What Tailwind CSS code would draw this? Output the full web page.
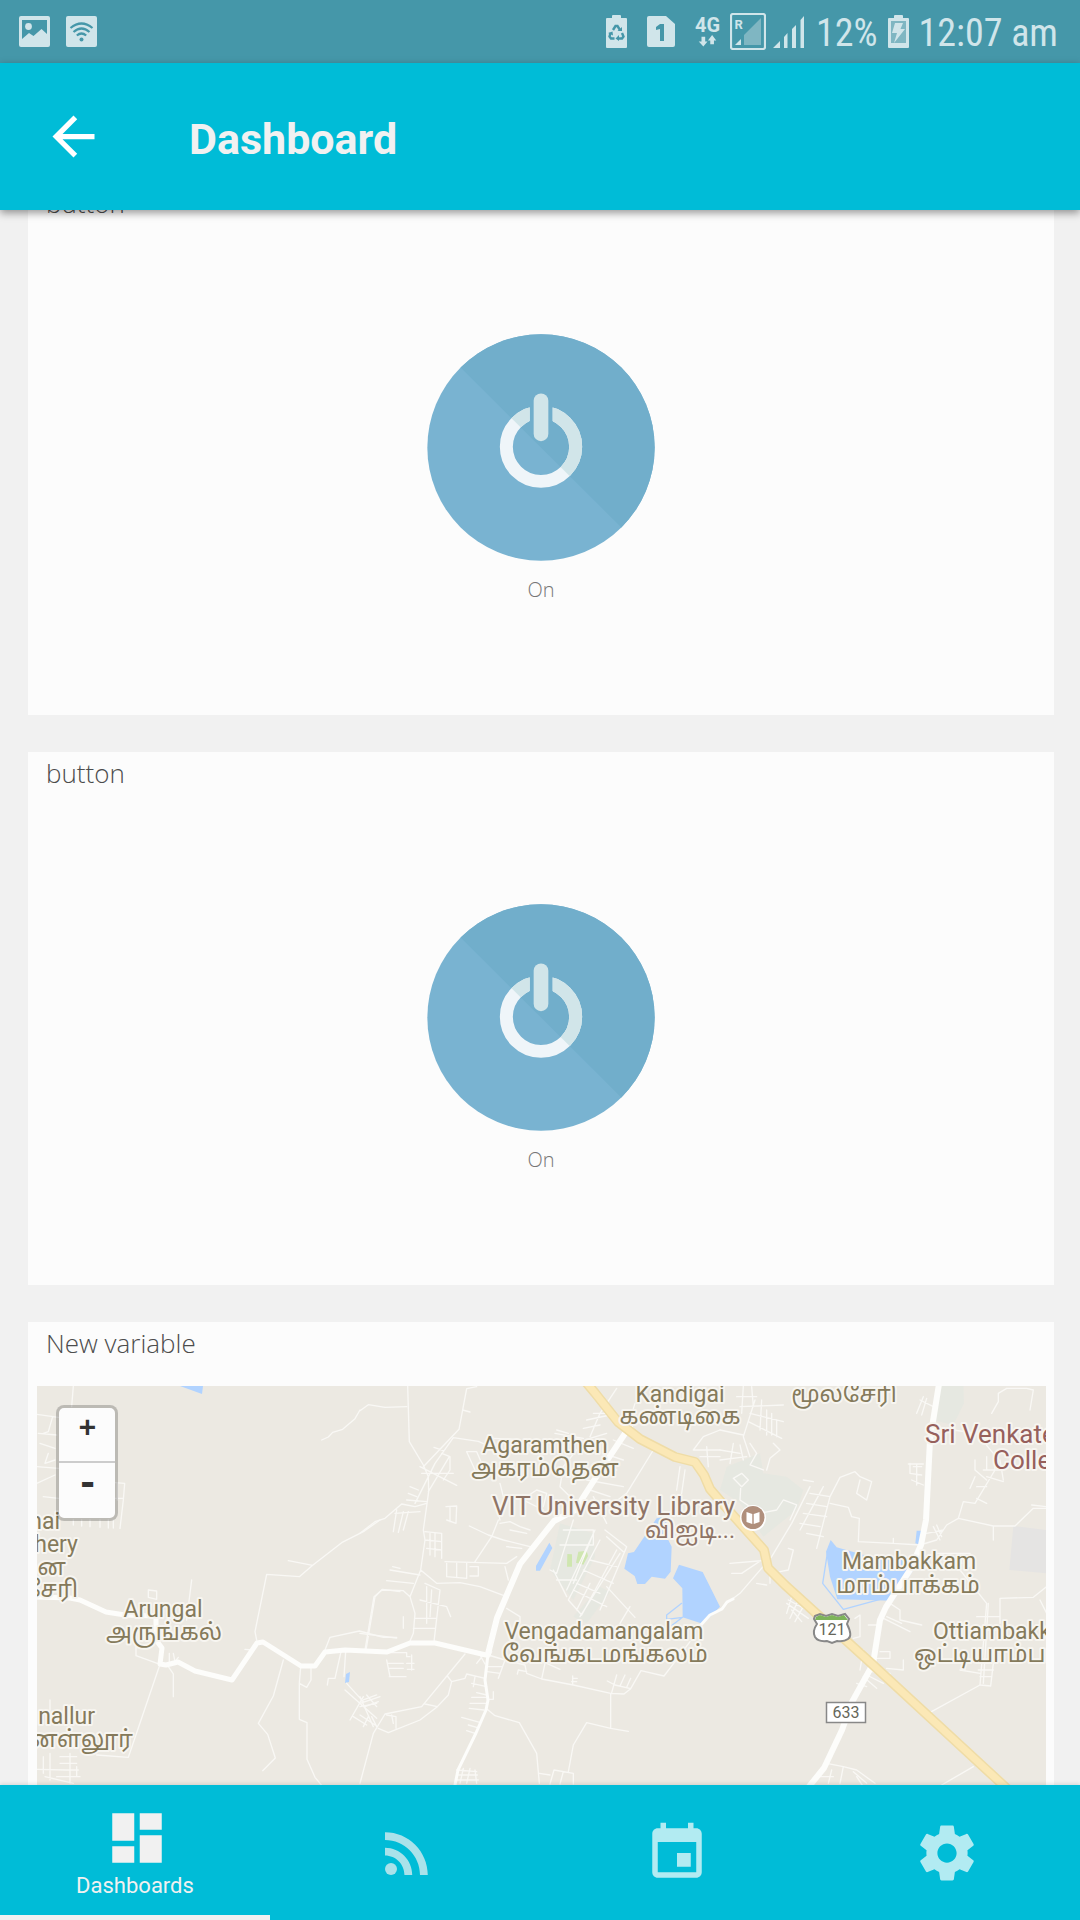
<!DOCTYPE html>
<html lang="en">
<head>
<meta charset="utf-8">
<meta name="viewport" content="width=device-width, initial-scale=1">
<title>Dashboard</title>
<script src="https://cdn.jsdelivr.net/npm/@tailwindcss/browser@4"></script>
</head>
<body class="flex h-screen flex-col overflow-hidden bg-[#f1f1f1] font-['Roboto',sans-serif]">

<!-- Status bar -->
<div class="flex h-[63px] shrink-0 items-center justify-between bg-[#4597a9] pr-[22px] pl-[19px] text-[#d0e5ea]">
  <div class="flex items-center gap-4">
    <svg class="h-[31px] w-[31px]" viewBox="0 0 31 31" fill="currentColor" aria-hidden="true"><path fill-rule="evenodd" d="M2 0H29Q31 0 31 2V29Q31 31 29 31H2Q0 31 0 29V2Q0 0 2 0ZM3 4V23L10 17L14.500 20L22.500 13L28 18V4Z"/><circle cx="9.500" cy="10.500" r="3.400"/></svg>
    <svg class="h-[31px] w-[31px]" viewBox="0 0 31 31" aria-hidden="true"><rect width="31" height="31" rx="2" fill="currentColor"/><g fill="none" stroke="#4597a9" stroke-width="2.200"><path d="M4.500 12Q15.500 3 26.500 12"/><path d="M7.500 16Q15.500 9 23.500 16"/><path d="M10.800 19.500Q15.500 15.500 20.200 19.500"/></g><circle cx="15.500" cy="23.500" r="2" fill="#4597a9"/></svg>
  </div>
  <div class="flex items-center">
    <svg class="h-[33px] w-[21px]" viewBox="0 0 21 33" aria-hidden="true"><path fill="currentColor" d="M6 1Q6 0 7 0H14Q15 0 15 1V3H20Q21 3 21 4V32Q21 33 20 33H1Q0 33 0 32V4Q0 3 1 3H6Z"/><g fill="none" stroke="#4597a9" stroke-width="2.400"><path d="M7 15L9.500 11H11.500L14 15M4.500 18L3.500 21.500L5 23.500H8.500M12.500 23.500H16L17.500 21.500L16 18"/></g><path fill="#4597a9" d="M11.500 16H16V12ZM2 18L6.500 16.500L7 20.500ZM13 20V26L9.500 23.500Z"/></svg>
    <svg class="ml-5 h-[31px] w-[28px]" viewBox="0 0 28 31" aria-hidden="true"><path fill="currentColor" d="M2 0H19L28 8V29Q28 31 26 31H2Q0 31 0 29V2Q0 0 2 0Z"/><path fill="#4597a9" d="M13 8H17V25H13V13L9 14V11Z"/></svg>
    <div class="ml-5 flex w-[25px] flex-col items-center">
      <span class="text-[20px] leading-[19px] font-bold">4G</span>
      <svg class="h-[12px] w-[19px]" viewBox="0 0 19 13" fill="currentColor" aria-hidden="true"><path d="M3 2H7V7H9.500L5 12.500L0 7H3ZM12.500 10V6H10L14.500 0L19 6H16.500V10Z"/></svg>
    </div>
    <svg class="ml-2.5 h-[37px] w-[36px]" viewBox="0 0 36 37" aria-hidden="true"><rect x="1" y="1" width="34" height="35" rx="2" fill="none" stroke="currentColor" stroke-width="2.200"/><path fill="#7fb6c2" d="M31 5V32H14V22Z"/><path fill="currentColor" d="M11 26V32H5Z"/><text x="4.500" y="16" font-size="13" font-weight="700" fill="currentColor">R</text></svg>
    <svg class="ml-[7px] h-[32px] w-[31px]" viewBox="0 0 31 32" fill="currentColor" aria-hidden="true"><path d="M0 32L7 25V32ZM11 21L14.500 17V32H11ZM19 13L23 9V32H19ZM27.500 4L31 0V32H27.500Z"/></svg>
    <span class="ml-3 pt-1 font-['Roboto_Condensed','Liberation_Sans_Narrow','Roboto',sans-serif] text-[38px] leading-[59px]">12%</span>
    <svg class="ml-2.5 h-[33px] w-[21px]" viewBox="0 0 21 33" aria-hidden="true"><path fill="currentColor" d="M6 1Q6 0 7 0H14Q15 0 15 1V3H20Q21 3 21 4V32Q21 33 20 33H1Q0 33 0 32V4Q0 3 1 3H6Z"/><path fill="#7fb6c2" d="M3 6H18V28H3Z"/><path fill="currentColor" d="M7 8H15L12.500 14H17L6 28L9 18H4Z"/></svg>
    <span class="ml-2.5 pt-1 font-['Roboto_Condensed','Liberation_Sans_Narrow','Roboto',sans-serif] text-[38px] leading-[59px]">12:07 am</span>
  </div>
</div>

<!-- Toolbar -->
<header class="relative z-10 flex h-[147px] shrink-0 items-center bg-[#00bcd7] shadow-[0_3px_8px_rgba(0,0,0,0.4)]">
  <button type="button" aria-label="Back" class="ml-[42px] text-white">
    <svg class="h-[63px] w-[63px]" viewBox="0 0 24 24" fill="currentColor"><path d="M20 11H7.830l5.590-5.590L12 4l-8 8 8 8 1.410-1.410L7.830 13H20v-2z"/></svg>
  </button>
  <h1 class="ml-[84px] pt-1 text-[43px] leading-[52px] font-bold text-[#f1f1f1]">Dashboard</h1>
</header>

<main class="min-h-0 flex-1 overflow-hidden">
  <div class="-mt-7 flex flex-col gap-[37px] pr-[26px] pl-7">

    <section class="flex h-[533px] flex-col bg-[#fcfcfc]">
      <h2 class="px-[18px] pt-[3px] font-['Open_Sans',sans-serif] text-[26px] leading-9 font-light text-[#4c4c4c]">button</h2>
      <div class="flex flex-1 flex-col items-center justify-center gap-4">
        <button type="button" aria-label="Toggle first button" class="rounded-full">
          <svg class="h-[227px] w-[228px]" viewBox="0 0 684 684" preserveAspectRatio="none">
            <defs>
              <clipPath id="disc"><circle cx="342" cy="342" r="341"/></clipPath>
              <clipPath id="ring"><path d="M0 0H308V342H377V0H684V684H0Z"/></clipPath>
              <clipPath id="upper"><path d="M0 0H684V684Z"/></clipPath>
            </defs>
            <g id="power">
              <g clip-path="url(#disc)"><path fill="#79b3d1" d="M0 0H684V684H0Z"/><path fill="#71aecb" d="M0 0H684V684Z"/></g>
              <g clip-path="url(#ring)" fill="none" stroke-width="39"><circle cx="342" cy="340" r="104" stroke="#eff5f9"/><circle cx="342" cy="340" r="104" stroke="#d1e5e9" clip-path="url(#upper)"/></g>
              <rect x="320" y="179" width="44" height="144" rx="22" fill="#d1e5e9"/>
            </g>
          </svg>
        </button>
        <p class="font-['Open_Sans',sans-serif] text-[20px] leading-[26px] font-light text-[#777]">On</p>
      </div>
    </section>

    <section class="flex h-[533px] flex-col bg-[#fcfcfc]">
      <h2 class="px-[18px] pt-[3px] font-['Open_Sans',sans-serif] text-[26px] leading-9 font-light text-[#4c4c4c]">button</h2>
      <div class="flex flex-1 flex-col items-center justify-center gap-4">
        <button type="button" aria-label="Toggle second button" class="rounded-full">
          <svg class="h-[227px] w-[228px]" viewBox="0 0 684 684" preserveAspectRatio="none"><use href="#power"/></svg>
        </button>
        <p class="font-['Open_Sans',sans-serif] text-[20px] leading-[26px] font-light text-[#777]">On</p>
      </div>
    </section>

    <section class="bg-[#fcfcfc]">
      <h2 class="px-[18px] pt-[3px] font-['Open_Sans',sans-serif] text-[26px] leading-9 font-light text-[#4c4c4c]">New variable</h2>
      <div class="relative mt-[25px] mr-2 ml-[9px] h-[480px] overflow-hidden bg-[#ece9e2]">
        <svg class="h-full w-full" viewBox="37 1386 1009 480" preserveAspectRatio="xMidYMin slice" role="img" aria-label="Map around Mambakkam">
          <g stroke-linejoin="round" stroke-linecap="round">
            <!-- Campus grounds and water -->
            <g transform="translate(360 1370) scale(.33333)">
              <path fill="#e6e8e1" d="M600 460L700 490L705 560L640 690L570 600ZM720 650L750 665L680 760L640 740Z"/>
              <path fill="#b1d3ff" d="M568 518L577 534L540 602H528V588ZM890 445L918 440L920 500L935 530L932 605L915 626L875 620L855 642H832L824 618L793 596L804 550L822 546ZM957 584L1028 606L1080 710L1030 762L968 742L967 655L939 625Z"/>
              <path fill="none" stroke="#b1d3ff" stroke-width="4" d="M965 700L920 735V748L968 742L930 770"/>
              <path fill="#cfe6b0" d="M622 552L636 553V590H621ZM655 545L680 542L684 558L670 584L648 578Z"/>
            </g>
            <g transform="translate(720 1370) scale(.33333)">
              <path fill="#e6e8e1" d="M20 290L120 250L130 310L200 320L250 360L230 420L130 500L60 400L0 360ZM655 48H730L732 100L700 165L640 150Z"/>
              <path fill="#e5e4e3" d="M880 468L980 480V610L868 600Z"/>
              <path fill="#b1d3ff" d="M332 510L350 532L450 560L600 570L520 692L352 688L330 620L318 545ZM590 482H615L600 524L586 520Z"/>
              <path fill="none" stroke="#b1d3ff" stroke-width="4" d="M322 550L308 640L370 718L480 688"/>
            </g>
            <path fill="#b1d3ff" d="M180 1386H203L202 1394Z"/>
            <path fill="#b1d3ff" d="M346 1674L350 1672L349 1682L345 1683Z"/>

            <!-- Minor streets -->
            <g fill="none" stroke="#f9f8f5" stroke-width="4">
              <g transform="translate(0 1300) scale(.33333)">
                <path d="M220 258L215 320M110 343L175 352M115 400L170 405M120 430L165 445M110 500L175 505M110 550L165 525M130 590L175 595M145 460L135 490L165 480M345 548L374 550L370 600L360 685M345 595H370M352 550V600M220 660V675M245 660V678M270 660V680M300 660V682M325 660V684M340 660V684M965 420L985 411L998 397L1028 388L1065 356L1080 330M158 350L145 395L130 400"/>
              </g>
              <g transform="translate(0 1520) scale(.33333)">
                <path d="M865 122L938 136M1140 0L1090 35L1025 68L938 136L898 170L800 163L765 335L770 360M445 210L470 213V238L445 232ZM575 180L560 300M408 380V407L480 433L385 712L290 705M508 400V430M520 400L525 425M535 412L520 430M505 440L520 462V530M735 388L755 390M850 420L820 528L775 610L803 643L826 714L788 752M902 440L898 490L920 502L933 480V445M898 490L898 598L921 608V718L945 772L965 796M975 390L990 352L1078 333L1150 352L1190 352M1095 390L1122 230L1148 208L1200 215M1023 395L1005 475H985L982 495M1037 395L1032 470M1040 490L1090 545M1035 510L1130 595M1090 530L1050 600M1100 525L1130 560M1080 560L1130 550M1060 590L1100 615M1115 590L1130 620M1178 140L1200 145M110 748L200 750M130 710V760M150 700V780M210 700V790M180 710H230M180 730H230M180 750H235M170 770H240M135 770L220 790M230 740V770M150 540V570M120 570L150 580"/>
              </g>
              <g transform="translate(360 1370) scale(.33333)">
                <path d="M143 48L148 215L190 285L205 320L206 365L190 480L195 510L182 600L150 680L165 730L160 790L145 825M0 122L25 104L75 112L140 110M350 50L320 56L297 178L190 290M308 120L330 126M280 203L355 214L380 225L400 205L470 208M280 203L225 280L165 400M222 232L250 242M268 260L205 365M245 250L270 260V300L250 330M180 290L290 346M185 310L280 310M0 490L45 455L75 445L125 402L165 410L200 400M150 350L175 360M145 370L170 380M140 390L200 395M110 420L100 485M130 425L115 487M105 430L180 425M145 425L130 480M258 410L290 408L288 460L260 450M270 410V455M195 485L245 490V565M210 490V555M225 490V560M195 510L245 515M200 535L245 540M328 468L385 495L430 510L510 530M415 450L395 500L345 575M410 400L420 450M182 600L230 640L300 638L360 650L440 680M90 600L180 615M80 632L160 640M255 575L360 578L440 580L470 560M260 580V620L320 625V580M290 580V620M330 590H355V618H330M420 460L450 455L480 470L510 480M450 480L500 490M440 530L485 535M435 590L445 630M0 790L110 804M18 840L45 680L65 660L130 662L150 680M195 640L240 660L222 815M180 690L260 710L272 740M200 650V760M215 660L210 740M165 745H230M160 775H225M130 740V775M420 340L430 380L480 385L550 420M320 245L345 300M320 245H350L365 280M585 190L640 200L670 205M590 180L625 190M770 55L720 130L690 200M680 150L750 135M670 175L720 165M700 130L750 130M690 205L740 190M650 240L610 290L600 350L650 400M825 100L800 180M880 240L800 370L760 400M700 280L770 300M680 330L790 350M690 360L750 380M730 250L790 270M760 210L820 235M500 380L530 360L560 370L550 410M700 380L740 460M640 450L590 610L570 600M610 480H700M600 525H700V480M590 630H650M580 600L620 680M700 490L640 640M735 480L800 530L720 720M720 510L625 690L665 735L770 540M640 660L740 710M650 640L720 670M670 600L760 640M690 570L770 590M740 500L790 545M650 720L690 640M705 480L620 660M660 740L780 550M740 650L825 742M780 760L810 710M1080 180L1030 200L1000 240M950 360L960 290M975 300L965 370M1000 240H1080M1020 260H1080M1040 230L1045 290"/>
              </g>
              <g transform="translate(360 1600) scale(.33333)">
                <path d="M0 550L40 400L75 342L185 320L315 162M55 385L85 398L180 360L232 320L265 285L275 245L262 228M195 312L232 320M275 245L315 235L320 222L375 235M80 345L108 350V385M95 345L100 370M0 290L40 380M0 310L60 290M10 300L50 285M15 320L55 305M0 345L45 375M25 350L10 380M140 158H80M140 158V170H150M155 165V210M140 190H162M142 208H162M80 180L90 230M85 190H130M85 205H130M88 230H138M370 165L350 190M360 165L375 192M395 155L385 175M385 165L435 180L415 235M385 200H425M382 215L420 220M345 230L340 260M335 250L380 260M350 278L380 285M335 292H378M330 310H378M328 325L372 330M400 275V298H382M305 352L362 368M325 375L350 382M320 392L345 400M378 325L405 347L478 368L530 460L538 550M538 520L570 525M570 552L582 510L640 520V552M610 515L600 552M625 515L640 435L680 368L752 385L805 394M752 280V385M435 180L495 195L500 220L545 237L640 255L752 280L792 282L812 266L843 212L912 228L945 185L990 125M472 222L475 210L500 215M555 190L545 237M560 190L600 208M638 228V252M638 235H652M635 245H650M770 225L755 278M795 225L780 258M742 243L765 255L812 266M812 235L800 262M440 25L480 50V65M290 510L350 515M295 525H352M290 540H355M310 505L300 550M330 505L320 550M345 510L350 550"/>
              </g>
              <g transform="translate(720 1370) scale(.33333)">
                <path d="M70 48L65 130M95 50L100 110M50 80H110M60 110L190 105M90 130L190 155M85 155L185 205M105 90L70 200L90 260M125 90L120 180M140 120V195M155 130V195M170 150V200M0 180L70 195M0 240L60 250M40 220L30 280M0 270L80 260M60 225L70 270M90 220L110 250L90 285L130 300M160 220L180 240L150 265L140 300M40 325L65 310L85 330L65 350ZM62 355L60 390L120 430L170 420L190 390L230 405L210 450M250 330L280 335M270 350L215 460L155 560L60 670L20 700L0 720M310 350L240 480M330 380L290 535M270 370L330 380M260 400L320 410M250 430L320 440M240 460L300 470M260 490L310 500M330 380L360 322L405 305L420 320L455 335L440 390L410 370L420 330M330 400L385 412L395 440L418 445L415 515L520 520L600 525M520 505V520M30 580L150 570M35 610H65L125 570M205 535L220 540L205 600L180 605M110 640L140 645M150 610V640M215 680L200 730M235 690L210 745M255 700L225 755M200 700L265 745M205 690L280 730M215 720L245 755M405 745L420 735V800L400 805M445 765H470M480 845H510V865H470M420 900L430 840M550 870V900L500 895M510 700L540 720V750L605 765M495 715L480 740L570 785M500 740L545 760M410 940L440 950M430 920L470 955M440 915L490 940M455 905L510 910M600 90L640 110M610 80L590 130M620 85L605 135M565 282H610M580 290H605M570 310L605 315M575 330L610 345M570 280V310M590 282V345M815 130L835 95V70L860 55H920L940 60L930 120M700 180L770 190L820 250L825 300L765 400L730 395L715 445L820 468H885L940 415H980M935 405L980 410M715 445L680 465L650 510L600 525M620 490L670 480M640 470L660 510M650 465L665 500M820 468V510M800 260V300M790 300H850M765 270V300L800 330M840 270L850 330M800 320L850 335M765 320L750 355M770 350H800M770 385L800 400M650 550H720L725 580M680 570L720 600L800 700L780 945M720 550H750V590M840 685V760M840 685L940 682L980 650M960 690L980 730M770 740H840M780 780H830M775 900H820M780 920H815M720 900L780 910M805 700L790 940M820 880L812 948L780 945L625 1030M320 1180L370 1190L410 1200L465 1240M335 1200L325 1240M370 1190L360 1240M300 1220H340M400 1205L440 1240M410 1220L430 1250M665 1245L760 1190"/>
              </g>
            </g>

            <!-- Main local roads -->
            <g fill="none" stroke="#fdfdfb">
              <path stroke-width="5" d="M36 1597L70 1598L80 1600L106 1612L125 1615L156 1616L156 1640L162 1648L160 1664L166 1665L178 1662L195 1671L232 1680L257 1643L263 1642L301 1666H315L325 1652L345 1650L387 1652L410 1643L435 1643L486 1655"/>
              <path stroke-width="6" d="M488 1654L497 1618L520 1564L554 1521L575 1510L602 1468L630 1426"/>
              <path stroke-width="3" d="M488 1654L485 1680L488 1700L486 1710L476 1733L458 1770L454 1790M700 1626L710 1615L722 1609L727 1602L733 1599"/>
              <path stroke-width="6" d="M939 1384L930 1440L926 1520L921 1545L910 1570L886 1607L880 1620L873 1664L852 1702L842 1730L824 1768L790 1810"/>
            </g>

            <!-- Highway -->
            <g fill="none">
              <path stroke="#efdca6" stroke-width="10" d="M585 1381L595 1393L618 1422L640 1439L675 1457L695 1462L704 1475L710 1489L722 1503L764 1550L768 1568L785 1585L872 1664L1015 1796"/>
              <path stroke="#fbe8b6" stroke-width="7" d="M585 1381L595 1393L618 1422L640 1439L675 1457L695 1462L704 1475L710 1489L722 1503L764 1550L768 1568L785 1585L872 1664L1015 1796"/>
            </g>
          </g>

          <!-- Place names -->
          <g font-family="Roboto, 'Noto Sans Tamil', 'Noto Sans', sans-serif" font-size="23" fill="#857a5b" stroke="#f7f5f0" stroke-width="4" stroke-linejoin="round" paint-order="stroke">
            <g text-anchor="middle">
              <text x="680" y="1402">Kandigai</text><text x="680" y="1424">கண்டிகை</text>
              <text x="844" y="1402">மூலசேரி</text>
              <text x="545" y="1453">Agaramthen</text><text x="545" y="1476">அகரம்தென்</text>
              <text x="909" y="1569">Mambakkam</text><text x="908" y="1593">மாம்பாக்கம்</text>
              <text x="604" y="1639">Vengadamangalam</text><text x="605" y="1662">வேங்கடமங்கலம்</text>
              <text x="163" y="1617">Arungal</text><text x="164" y="1640">அருங்கல்</text>
            </g>
            <text x="933" y="1639">Ottiambakkam</text><text x="914" y="1662">ஒட்டியாம்பாக்கம்</text>
            <g text-anchor="end">
              <text x="60" y="1529">nai</text><text x="78" y="1552">hery</text><text x="66" y="1575">ன</text><text x="78" y="1597">சேரி</text>
              <text x="95" y="1724">nallur</text><text x="133" y="1747">னள்லூர்</text>
              <g fill="#8f7466"><text x="735" y="1515" font-size="26">VIT University Library</text><text x="735" y="1538">விஐடி...</text></g>
            </g>
            <g fill="#96605c" font-size="26"><text x="925" y="1443">Sri Venkate</text><text x="993" y="1469">Colle</text></g>
          </g>

          <!-- Library pin -->
          <circle cx="753" cy="1518" r="13" fill="#fff"/><circle cx="753" cy="1517.500" r="11.500" fill="#b08f7c"/>
          <path fill="#fff" d="M746.500 1512L752.300 1514V1524L746.500 1522ZM759.500 1512L753.700 1514V1524L759.500 1522Z"/>

          <!-- Route shields -->
          <path fill="#fff" stroke="#888" stroke-width="2" d="M815 1616L820 1614L826 1616L832 1614L838 1616L845 1614L849 1619L847 1624Q853 1636 848 1639Q844 1642 837 1641L832 1643L827 1641Q818 1642 815 1637Q812 1631 817 1624L814 1619Z"/>
          <path fill="#7db45a" d="M816 1617L820 1615L826 1617L832 1615L838 1617L844 1615L848 1620H815Z"/>
          <rect x="826.500" y="1702.500" width="39" height="20" fill="#fff" stroke="#888" stroke-width="1.500"/>
          <g font-family="Roboto, sans-serif" font-size="16" fill="#66665a" text-anchor="middle"><text x="832" y="1635">121</text><text x="846" y="1718">633</text></g>
        </svg>

        <!-- Zoom control lies over the map -->
        <div class="absolute top-[19px] left-[19px] flex w-[62px] flex-col rounded-lg border-3 border-black/20 bg-[#fcfcfc] bg-clip-padding font-['DejaVu_Sans_Mono',monospace] font-bold text-[#333]">
          <button type="button" aria-label="Zoom in" class="h-[55px] border-b-2 border-[#ccc] pb-4 pl-px text-[28px] leading-[38px]">+</button>
          <button type="button" aria-label="Zoom out" class="h-[55px] pb-4 pl-px text-[36px] leading-[38px]">-</button>
        </div>
      </div>
    </section>
  </div>
</main>

<!-- Bottom tabs -->
<nav class="relative z-10 grid h-[135px] shrink-0 grid-cols-4 bg-[#00bcd7] shadow-[0_-1px_4px_rgba(0,0,0,0.12)]">
  <a href="#dashboards" aria-current="page" class="flex flex-col items-center justify-center gap-0.5 border-b-5 border-[#f1f1f1] pt-1 text-[#f1f1f1]">
    <svg class="ml-1 h-[66px] w-[66px]" viewBox="0 0 24 24" fill="currentColor" aria-hidden="true"><path d="M3 13h8V3H3v10zm0 8h8v-6H3v6zm10 0h8V11h-8v10zm0-18v6h8V3h-8z"/></svg>
    <span class="text-[22px] leading-[26px]">Dashboards</span>
  </a>
  <a href="#feeds" aria-label="Feeds" class="flex items-center justify-center text-[#aae2ea]">
    <svg class="ml-1 h-[66px] w-[66px]" viewBox="0 0 24 24" fill="currentColor"><circle cx="6.180" cy="17.820" r="2.180"/><path d="M4 4.440v2.830c7.030 0 12.730 5.700 12.730 12.730h2.830c0-8.590-6.970-15.560-15.560-15.560zm0 5.660v2.830c3.900 0 7.070 3.170 7.070 7.070h2.830c0-5.470-4.430-9.900-9.900-9.900z"/></svg>
  </a>
  <a href="#events" aria-label="Events" class="flex items-center justify-center text-[#b2ebf2]">
    <svg class="ml-1 h-[66px] w-[66px]" viewBox="0 0 24 24" fill="currentColor"><path d="M17 12h-5v5h5v-5zM16 1v2H8V1H6v2H5c-1.110 0-1.990.9-1.990 2L3 19c0 1.100.89 2 2 2h14c1.100 0 2-.9 2-2V5c0-1.100-.9-2-2-2h-1V1h-2zm3 18H5V8h14v11z"/></svg>
  </a>
  <a href="#settings" aria-label="Settings" class="flex items-center justify-center text-[#b2ebf2]">
    <svg class="ml-1 h-[66px] w-[66px]" viewBox="0 0 24 24" fill="currentColor"><path d="M19.430 12.980c.04-.32.07-.64.07-.98s-.03-.66-.07-.98l2.110-1.650c.19-.15.24-.42.12-.64l-2-3.460c-.12-.22-.39-.3-.61-.22l-2.490 1c-.52-.4-1.080-.73-1.690-.98l-.38-2.650C14.460 2.180 14.250 2 14 2h-4c-.25 0-.46.18-.49.42l-.38 2.650c-.61.25-1.170.59-1.690.98l-2.490-1c-.23-.09-.49 0-.61.22l-2 3.460c-.13.22-.07.49.12.64l2.110 1.650c-.04.32-.07.65-.07.98s.03.66.07.98l-2.110 1.650c-.19.15-.24.42-.12.64l2 3.460c.12.22.39.3.61.22l2.490-1c.52.4 1.080.73 1.690.98l.38 2.650c.03.24.24.42.49.42h4c.25 0 .46-.18.49-.42l.38-2.650c.61-.25 1.170-.59 1.690-.98l2.490 1c.23.09.49 0 .61-.22l2-3.460c.12-.22.07-.49-.12-.64l-2.110-1.650zM12 15.500c-1.930 0-3.500-1.570-3.500-3.500s1.570-3.500 3.500-3.500 3.500 1.570 3.500 3.500-1.570 3.500-3.500 3.500z"/></svg>
  </a>
</nav>
</body>
</html>
